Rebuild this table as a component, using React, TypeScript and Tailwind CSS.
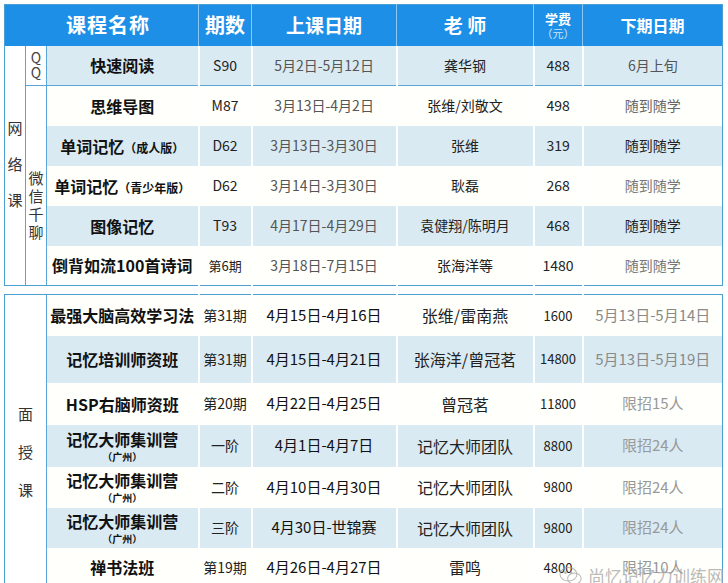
import React from 'react';

type Row = {
  h: string;
  bg: string;
  name: React.ReactNode;
  no: string;
  date: string;
  teacher: string;
  fee: string;
  next: string;
  nextC: string;
  noSmall?: boolean;
};

const BLUE = 'bg-[#d9eaf3]';
const WHITE = 'bg-[#fffffb]';

const netRows: Row[] = [
  { h: 'h-[40px]', bg: BLUE, name: '快速阅读', no: 'S90', date: '5月2日-5月12日', teacher: '龚华钢', fee: '488', next: '6月上旬', nextC: 'text-[#555]' },
  { h: 'h-[40px]', bg: WHITE, name: '思维导图', no: 'M87', date: '3月13日-4月2日', teacher: '张维/刘敬文', fee: '498', next: '随到随学', nextC: 'text-[#666]' },
  {
    h: 'h-[40px]',
    bg: BLUE,
    name: (
      <>
        单词记忆<span className="text-[12px]">（成人版）</span>
      </>
    ),
    no: 'D62',
    date: '3月13日-3月30日',
    teacher: '张维',
    fee: '319',
    next: '随到随学',
    nextC: 'text-[#222]',
  },
  {
    h: 'h-[40px]',
    bg: WHITE,
    name: (
      <>
        单词记忆<span className="text-[12px]">（青少年版）</span>
      </>
    ),
    no: 'D62',
    date: '3月14日-3月30日',
    teacher: '耿磊',
    fee: '268',
    next: '随到随学',
    nextC: 'text-[#777]',
  },
  { h: 'h-[40px]', bg: BLUE, name: '图像记忆', no: 'T93', date: '4月17日-4月29日', teacher: '袁健翔/陈明月', fee: '468', next: '随到随学', nextC: 'text-[#222]' },
  { h: 'h-[40px]', bg: WHITE, name: '倒背如流100首诗词', no: '第6期', date: '3月18日-7月15日', teacher: '张海洋等', fee: '1480', next: '随到随学', nextC: 'text-[#777]', noSmall: true },
];

const Camp = () => (
  <div>
    <div className="leading-[21px]">记忆大师集训营</div>
    <div className="text-[10px] leading-[13px]">（广州）</div>
  </div>
);

const faceRows: Row[] = [
  { h: 'h-[41px]', bg: WHITE, name: '最强大脑高效学习法', no: '第31期', date: '4月15日-4月16日', teacher: '张维/雷南燕', fee: '1600', next: '5月13日-5月14日', nextC: 'text-[#8a8a8a]' },
  { h: 'h-[47px]', bg: BLUE, name: '记忆培训师资班', no: '第31期', date: '4月15日-4月21日', teacher: '张海洋/曾冠茗', fee: '14800', next: '5月13日-5月19日', nextC: 'text-[#8a8a8a]' },
  { h: 'h-[42px]', bg: WHITE, name: 'HSP右脑师资班', no: '第20期', date: '4月22日-4月25日', teacher: '曾冠茗', fee: '11800', next: '限招15人', nextC: 'text-[#999]' },
  { h: 'h-[42px]', bg: BLUE, name: <Camp />, no: '一阶', date: '4月1日-4月7日', teacher: '记忆大师团队', fee: '8800', next: '限招24人', nextC: 'text-[#999]' },
  { h: 'h-[41px]', bg: WHITE, name: <Camp />, no: '二阶', date: '4月10日-4月30日', teacher: '记忆大师团队', fee: '9800', next: '限招24人', nextC: 'text-[#999]' },
  { h: 'h-[40px]', bg: BLUE, name: <Camp />, no: '三阶', date: '4月30日-世锦赛', teacher: '记忆大师团队', fee: '9800', next: '限招24人', nextC: 'text-[#999]' },
  { h: 'h-[40px]', bg: WHITE, name: '禅书法班', no: '第19期', date: '4月26日-4月27日', teacher: '雷鸣', fee: '4800', next: '限招10人', nextC: 'text-[#999]' },
];

const Cols = ({ merged }: { merged?: boolean }) => (
  <colgroup>
    {merged ? (
      <col className="w-[42px]" />
    ) : (
      <>
        <col className="w-[21px]" />
        <col className="w-[21px]" />
      </>
    )}
    <col className="w-[152px]" />
    <col className="w-[53px]" />
    <col className="w-[145px]" />
    <col className="w-[137px]" />
    <col className="w-[49px]" />
    <col className="w-[140px]" />
  </colgroup>
);

const sep = 'border-r-2 border-white';

const DataCells = ({ r, face, line }: { r: Row; face?: boolean; line?: boolean }) => {
  const b = line ? 'border-b border-b-[#5aa6d8]' : '';
  return (
    <>
      <td className={`${sep} ${b} text-center font-bold text-[16px] text-[#111] whitespace-nowrap`}>
        {r.name}
      </td>
      <td className={`${sep} ${b} text-center text-[#222] ${r.noSmall ? 'text-[13px]' : 'text-[14px]'}`}>{r.no}</td>
      <td className={`${sep} ${b} text-center ${face ? 'text-[15px] text-[#111]' : 'text-[14px] text-[#555]'}`}>{r.date}</td>
      <td className={`${sep} ${b} text-center text-[#222] ${face ? 'text-[16px]' : 'text-[14px]'}`}>{r.teacher}</td>
      <td className={`${sep} ${b} text-center text-[#222] ${face ? 'text-[13px]' : 'text-[14px]'}`}>{r.fee}</td>
      <td className={`${b} text-center ${r.nextC} ${face ? 'text-[15px]' : 'text-[14px]'}`}>{r.next}</td>
    </>
  );
};

const Watermark = () => (
  <div className="absolute left-[558px] top-[565px] flex items-center gap-[4px] text-[#a5a5a5] opacity-75">
    <svg width="26" height="22" viewBox="0 0 30 26" fill="none" stroke="#a0a0a0" strokeWidth="1.2">
      <ellipse cx="12" cy="11" rx="10" ry="8" />
      <ellipse cx="19" cy="16" rx="8" ry="6.5" />
      <circle cx="8.5" cy="9" r="1" fill="#a0a0a0" />
      <circle cx="15" cy="9" r="1" fill="#a0a0a0" />
    </svg>
    <span className="text-[17px] leading-[22px]">尚忆记忆力训练网</span>
  </div>
);

export default function App() {
  return (
    <div
      className="relative w-[728px] h-[583px] overflow-hidden bg-white pt-[4px] pl-[4px]"
      style={{ fontFamily: '"Microsoft YaHei", "Noto Sans CJK SC", "Noto Sans", sans-serif' }}
    >
      <table className="table-fixed border-collapse w-[718px] border border-[#4b9fd2]">
        <Cols />
        <tbody>
          <tr className="h-[41px] bg-[#1e8fe7] text-white font-bold">
            <td colSpan={3} className="border-r border-r-[#8cc8f2] text-left pl-[61px] text-[20px] tracking-[1px]">
              课程名称
            </td>
            <td className="border-r border-r-[#8cc8f2] text-center text-[20px]">期数</td>
            <td className="border-r border-r-[#8cc8f2] text-center text-[19px]">上课日期</td>
            <td className="border-r border-r-[#8cc8f2] text-center text-[19px]">老 师</td>
            <td className="border-r border-r-[#8cc8f2] text-center">
              <div className="text-[13px] leading-[16px]">学费</div>
              <div className="text-[11px] leading-[13px] font-normal text-[#cfe6fb]">（元）</div>
            </td>
            <td className="text-center text-[16px]">下期日期</td>
          </tr>
          {netRows.map((r, i) => (
            <tr key={i} className={`${r.h} ${r.bg}`}>
              {i === 0 && (
                <td rowSpan={6} className="bg-white border-r border-r-[#5aa6d8] text-center align-middle text-[15px] text-[#333]">
                  <div className="leading-[36px] -mt-[2px]">
                    <div>网</div>
                    <div>络</div>
                    <div>课</div>
                  </div>
                </td>
              )}
              {i === 0 && (
                <td className="bg-white border-r border-r-[#5aa6d8] border-b border-b-[#5aa6d8] text-center text-[14px] text-[#444] leading-[15px]">
                  <div>Q</div>
                  <div>Q</div>
                </td>
              )}
              {i === 1 && <td className="bg-white border-r border-r-[#5aa6d8]" />}
              {i === 2 && (
                <td rowSpan={4} className="bg-white border-r border-r-[#5aa6d8] text-center align-middle text-[15px] text-[#333] leading-[18px]">
                  <div>微</div>
                  <div>信</div>
                  <div>千</div>
                  <div>聊</div>
                </td>
              )}
              <DataCells r={r} line={i === 0} />
            </tr>
          ))}
        </tbody>
      </table>

      <table className="table-fixed border-collapse w-[718px] border border-[#4b9fd2] mt-[8px]">
        <Cols merged />
        <tbody>
          {faceRows.map((r, i) => (
            <tr key={i} className={`${r.h} ${r.bg}`}>
              {i === 0 && (
                <td rowSpan={7} className="bg-white border-r border-r-[#5aa6d8] text-center align-top text-[15px] text-[#333]">
                  <div className="leading-[38px] pt-[100px]">
                    <div>面</div>
                    <div>授</div>
                    <div>课</div>
                  </div>
                </td>
              )}
              <DataCells r={r} face />
            </tr>
          ))}
        </tbody>
      </table>
      <Watermark />
    </div>
  );
}
